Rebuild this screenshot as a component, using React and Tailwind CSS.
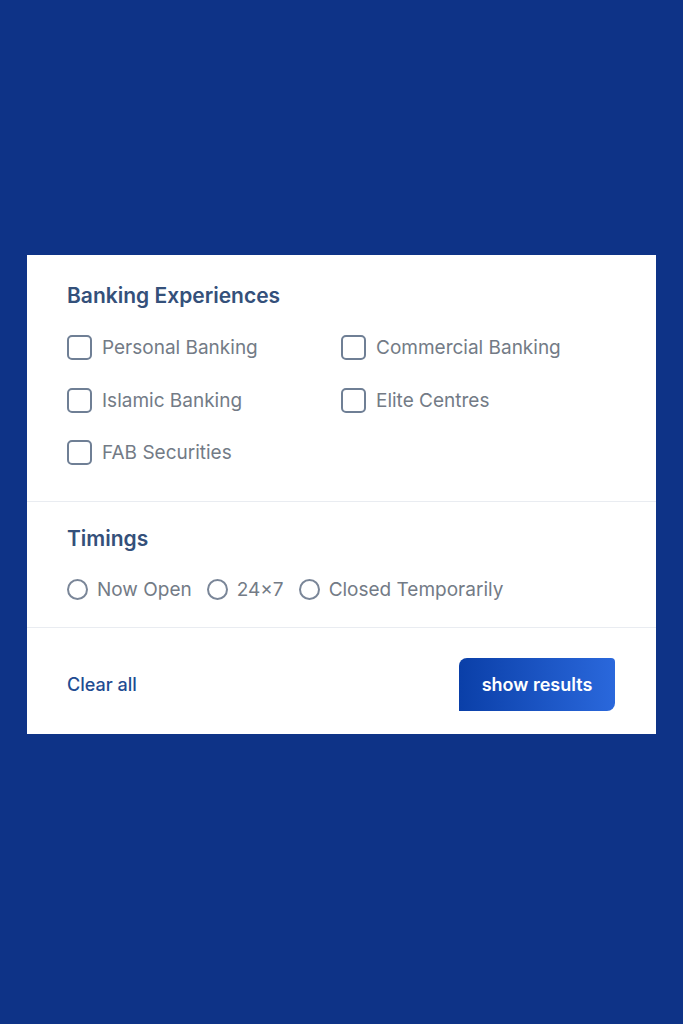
import { useState } from 'react';

const experiences = [
  ['Personal Banking', 'Commercial Banking'],
  ['Islamic Banking', 'Elite Centres'],
  ['FAB Securities'],
];

const timings = ['Now Open', '24×7', 'Closed Temporarily'];

function Box({ label }) {
  return (
    <label className="flex items-center gap-[10px] cursor-pointer">
      <span className="w-[25px] h-[25px] rounded-[5px] border-2 border-[#6f7f95] bg-white shrink-0" />
      <span className="text-[19px] text-[#737b86] leading-none">{label}</span>
    </label>
  );
}

function Radio({ label }) {
  return (
    <label className="flex items-center gap-[9px] cursor-pointer">
      <span className="w-[21px] h-[21px] rounded-full border-2 border-[#7a8698] bg-white shrink-0" />
      <span className="text-[19px] text-[#737b86] leading-none">{label}</span>
    </label>
  );
}

export default function App() {
  const [open] = useState(true);

  return (
    <div
      className="min-h-screen bg-[#0e3387] flex justify-center pt-[255px]"
      style={{ fontFamily: 'Inter, "Noto Sans", sans-serif' }}
    >
      {open && (
        <div className="w-[629px] h-fit bg-white">
          {/* Banking experiences */}
          <div className="px-[40px] pt-[30px] pb-[36px] border-b border-[#e9ecf1]">
            <h2 className="text-[21px] font-semibold text-[#34507a] leading-none">Banking Experiences</h2>
            <div className="mt-[29px] flex flex-col gap-[27.5px]">
              {experiences.map((row, i) => (
                <div key={i} className="grid grid-cols-[274px_1fr]">
                  {row.map(l => (
                    <Box key={l} label={l} />
                  ))}
                </div>
              ))}
            </div>
          </div>

          {/* Timings */}
          <div className="px-[40px] pt-[26px] pb-[27px] border-b border-[#e9ecf1]">
            <h2 className="text-[21px] font-semibold text-[#34507a] leading-none">Timings</h2>
            <div className="mt-[30px] flex items-center gap-[15px]">
              {timings.map(t => (
                <Radio key={t} label={t} />
              ))}
            </div>
          </div>

          {/* Footer */}
          <div className="px-[40px] pt-[30px] pb-[23px] flex items-center justify-between">
            <button className="text-[18px] text-[#1f4c92] font-medium">Clear all</button>
            <button className="w-[156px] h-[53px] mr-[1px] bg-gradient-to-r from-[#0a3fa8] to-[#2a68dc] text-white text-[18px] font-semibold rounded-tl-[8px] rounded-tr-[4px] rounded-br-[8px]">
              show results
            </button>
          </div>
        </div>
      )}
    </div>
  );
}
